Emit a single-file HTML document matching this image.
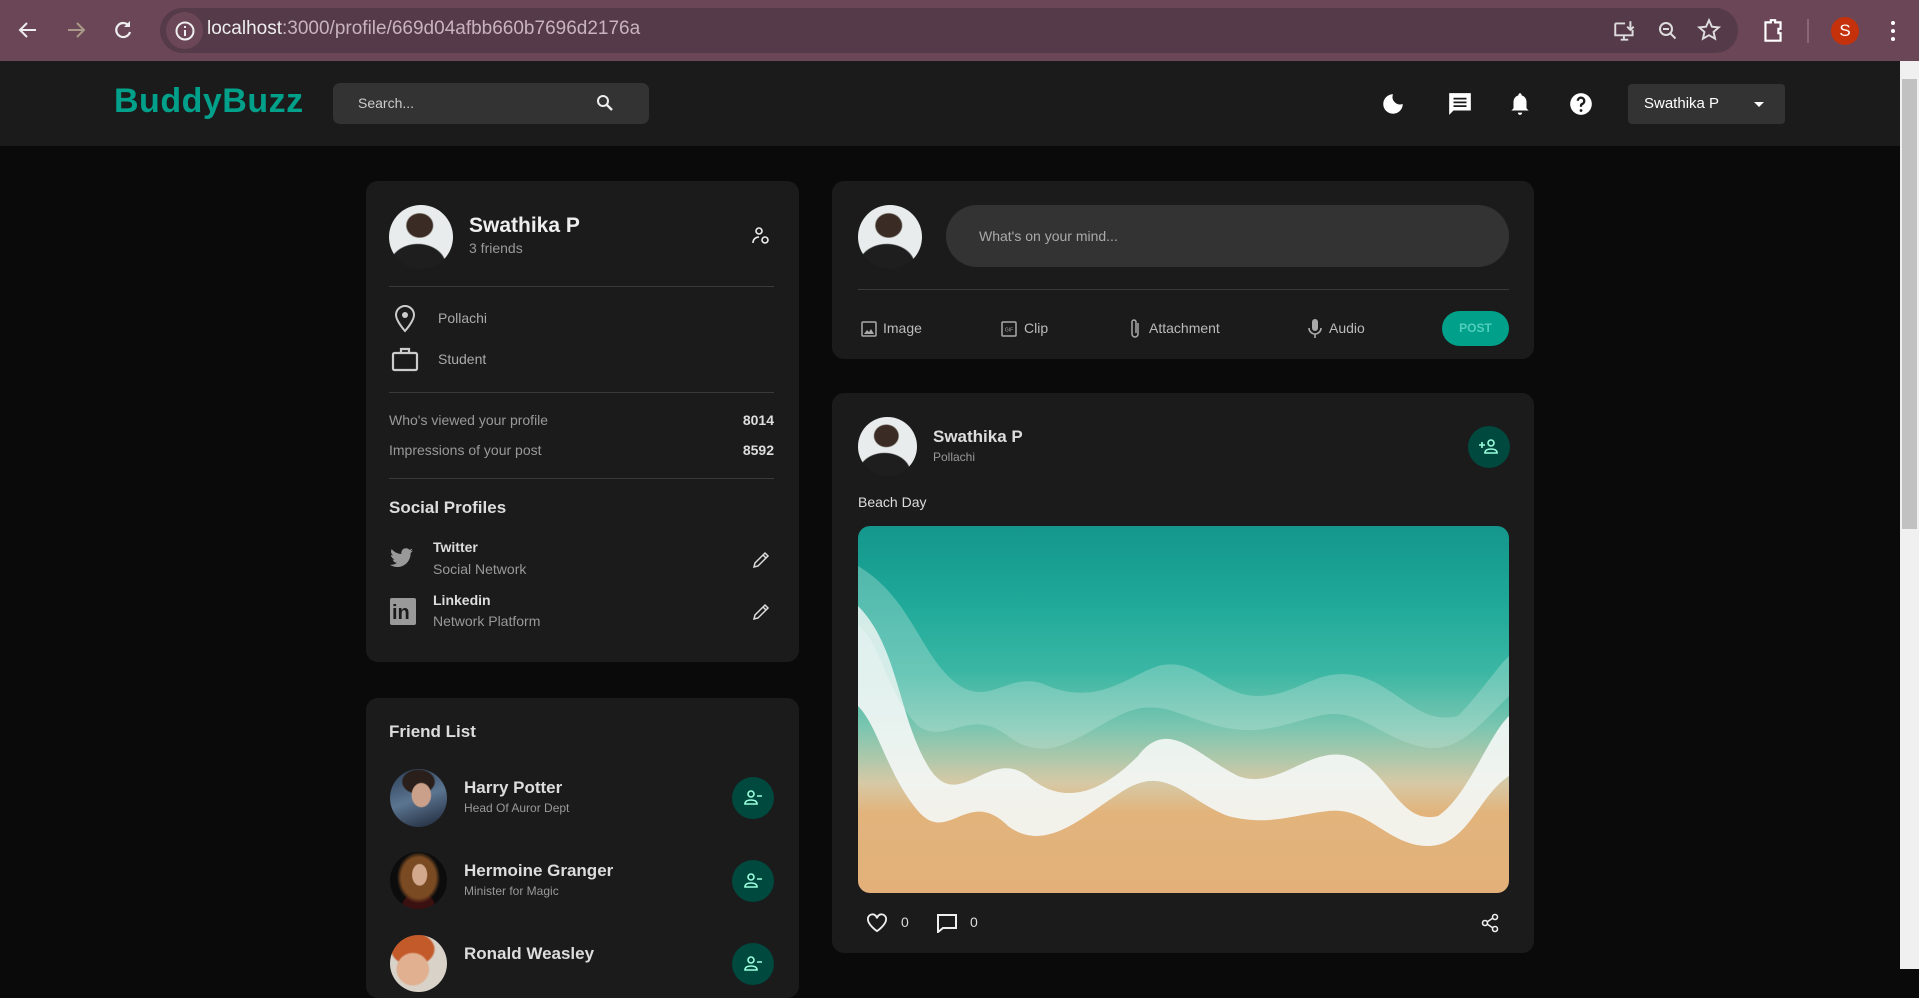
<!DOCTYPE html>
<html><head><meta charset="utf-8"><style>
*{box-sizing:border-box;margin:0;padding:0}
body{width:1919px;height:969px;overflow:hidden;background:#0a0a0a;font-family:"Liberation Sans",sans-serif;position:relative;color:#ddd}
.a{position:absolute}
.chrome{left:0;top:0;width:1919px;height:61px;background:#6b4657}
.url{left:160px;top:8px;width:1578px;height:45px;border-radius:23px;background:#553a49}
.nav{left:0;top:61px;width:1900px;height:85px;background:#1b1b1b}
.sb{left:1900px;top:61px;width:19px;height:908px;background:#f0f0f0}
.card{background:#1b1b1b;border-radius:12px}
.hr{height:1px;background:#3a3a3a}
.t{white-space:nowrap}
.av{border-radius:50%;overflow:hidden}
.me{background:radial-gradient(ellipse 22% 20% at 48% 32%,#3a2c24 0 90%,transparent 100%),radial-gradient(ellipse 45% 35% at 45% 95%,#1e1e1e 0 95%,transparent 100%),#e8ecec}
.btn{border-radius:50%;background:#00493f;width:42px;height:42px}
</style></head><body>
<div class="a chrome"></div>
<div class="a url"></div>
<svg class="a" style="left:16px;top:18px" width="24" height="24" viewBox="0 0 24 24"><path d="M20 12H5M11 5l-7 7 7 7" stroke="#eee" stroke-width="2" fill="none"/></svg>
<svg class="a" style="left:64px;top:18px" width="24" height="24" viewBox="0 0 24 24"><path d="M4 12h15M13 5l7 7-7 7" stroke="#a98" stroke-width="2" fill="none"/></svg>
<svg class="a" style="left:111px;top:18px" width="24" height="24" viewBox="0 0 24 24"><path d="M18 8a7 7 0 1 0 1 6" stroke="#eee" stroke-width="2.2" fill="none"/><path d="M19 3v6h-6z" fill="#eee"/></svg>
<div class="a" style="left:166px;top:12px;width:37px;height:37px;border-radius:50%;background:#6b4657"></div>
<svg class="a" style="left:174px;top:20px" width="22" height="22" viewBox="0 0 22 22"><circle cx="11" cy="11" r="8.5" stroke="#eee" stroke-width="2" fill="none"/><path d="M11 10v6M11 6v2" stroke="#eee" stroke-width="2"/></svg>
<div class="a t" style="left:207px;top:18px;font-size:19px;color:#eee">localhost<span style="color:#c9b3be">:3000/profile/669d04afbb660b7696d2176a</span></div>
<svg class="a" style="left:1612px;top:18px" width="26" height="26" viewBox="0 0 24 24"><path d="M3 5h9M3 5v11h16v-5M8 20h7M11 16v4" stroke="#ddd" stroke-width="1.8" fill="none"/><path d="M17 3v8M14 8l3 3 3-3" stroke="#ddd" stroke-width="1.8" fill="none"/></svg>
<svg class="a" style="left:1656px;top:19px" width="24" height="24" viewBox="0 0 24 24"><circle cx="10" cy="10" r="6" stroke="#ddd" stroke-width="2" fill="none"/><path d="M14.5 14.5l5 5M7 10h6" stroke="#ddd" stroke-width="2"/></svg>
<svg class="a" style="left:1696px;top:17px" width="26" height="26" viewBox="0 0 24 24"><path d="M12 3l2.7 6 6.3.6-4.8 4.2 1.4 6.2L12 16.8 6.4 20l1.4-6.2L3 9.6 9.3 9z" stroke="#ddd" stroke-width="1.8" fill="none"/></svg>
<svg class="a" style="left:1760px;top:17px" width="26" height="28" viewBox="0 0 24 26"><path d="M5 5h5V3h4v2h5v6h-2v4h2v7H5z" stroke="#fff" stroke-width="2" fill="none"/></svg>
<div class="a" style="left:1807px;top:19px;width:2px;height:24px;background:#8a6678"></div>
<div class="a" style="left:1831px;top:17px;width:28px;height:28px;border-radius:50%;background:#c5310b;color:#fff;font-size:17px;text-align:center;line-height:28px">S</div>
<div class="a" style="left:1891px;top:21px;width:4px;height:4px;border-radius:2px;background:#fff;box-shadow:0 8px #fff,0 16px #fff"></div>

<div class="a nav"></div>
<div class="a sb"><div style="position:absolute;left:2px;top:18px;width:15px;height:450px;background:#c1c1c1"></div></div>
<div class="a t" style="left:114px;top:82px;font-size:34px;font-weight:bold;color:#00a08a;letter-spacing:0.5px">BuddyBuzz</div>
<div class="a" style="left:333px;top:83px;width:316px;height:41px;border-radius:7px;background:#333"></div>
<div class="a t" style="left:358px;top:95px;font-size:14px;color:#ccc">Search...</div>
<svg class="a" style="left:595px;top:93px" width="20" height="20" viewBox="0 0 20 20"><circle cx="8" cy="8" r="5" stroke="#eee" stroke-width="2" fill="none"/><path d="M12 12l5 5" stroke="#eee" stroke-width="2.4"/></svg>
<svg class="a" style="left:1380px;top:91px" width="26" height="26" viewBox="0 0 24 24"><path d="M12 3a9 9 0 1 0 9 9 7 7 0 0 1-9-9z" fill="#fff"/></svg>
<svg class="a" style="left:1447px;top:91px" width="26" height="26" viewBox="0 0 24 24"><path d="M2 2h20v16H6l-4 4z" fill="#fff"/><path d="M6 7h12M6 10.5h12M6 14h12" stroke="#1b1b1b" stroke-width="1.6"/></svg>
<svg class="a" style="left:1507px;top:91px" width="26" height="26" viewBox="0 0 24 24"><path d="M12 2a2 2 0 0 1 1.5 2A6 6 0 0 1 18 10v6l2 2H4l2-2v-6a6 6 0 0 1 4.5-6A2 2 0 0 1 12 2zM10 20h4a2 2 0 0 1-4 0z" fill="#fff"/></svg>
<svg class="a" style="left:1568px;top:91px" width="26" height="26" viewBox="0 0 24 24"><circle cx="12" cy="12" r="10" fill="#fff"/><path d="M9 9a3 3 0 1 1 4 3c-1 .5-1 1-1 2.5" stroke="#1b1b1b" stroke-width="2.2" fill="none"/><circle cx="12" cy="18" r="1.3" fill="#1b1b1b"/></svg>
<div class="a" style="left:1628px;top:84px;width:157px;height:40px;border-radius:4px;background:#333"></div>
<div class="a t" style="left:1644px;top:95px;font-size:15px;color:#fff">Swathika P</div>
<div class="a" style="left:1754px;top:102px;border:5px solid transparent;border-top-color:#fff;border-bottom:0"></div>

<!-- profile card -->
<div class="a card" style="left:366px;top:181px;width:433px;height:481px"></div>
<div class="a av me" style="left:389px;top:205px;width:64px;height:64px"></div>
<div class="a t" style="left:469px;top:214px;font-size:21px;font-weight:bold;color:#eee">Swathika P</div>
<div class="a t" style="left:469px;top:240px;font-size:14px;color:#999">3 friends</div>
<svg class="a" style="left:751px;top:226px" width="20" height="20" viewBox="0 0 20 20"><circle cx="8" cy="5" r="3" stroke="#eee" stroke-width="1.6" fill="none"/><path d="M2 17c0-4 3-6 6-6" stroke="#eee" stroke-width="1.6" fill="none"/><circle cx="14" cy="14" r="3" stroke="#eee" stroke-width="1.6" fill="none"/></svg>
<div class="a hr" style="left:389px;top:286px;width:385px"></div>
<svg class="a" style="left:393px;top:305px" width="24" height="28" viewBox="0 0 24 28"><path d="M12 26S3 16 3 10a9 9 0 0 1 18 0c0 6-9 16-9 16z" stroke="#ccc" stroke-width="2" fill="none"/><circle cx="12" cy="10" r="3" fill="#ccc"/></svg>
<div class="a t" style="left:438px;top:310px;font-size:14px;color:#aaa">Pollachi</div>
<svg class="a" style="left:391px;top:346px" width="28" height="26" viewBox="0 0 28 26"><rect x="2" y="7" width="24" height="17" rx="1.5" stroke="#ccc" stroke-width="2.2" fill="none"/><path d="M10 7V3h8v4" stroke="#ccc" stroke-width="2.2" fill="none"/></svg>
<div class="a t" style="left:438px;top:351px;font-size:14px;color:#aaa">Student</div>
<div class="a hr" style="left:389px;top:392px;width:385px"></div>
<div class="a t" style="left:389px;top:412px;font-size:14px;color:#999">Who's viewed your profile</div>
<div class="a t" style="left:700px;top:412px;width:74px;text-align:right;font-size:14px;font-weight:bold;color:#ddd">8014</div>
<div class="a t" style="left:389px;top:442px;font-size:14px;color:#999">Impressions of your post</div>
<div class="a t" style="left:700px;top:442px;width:74px;text-align:right;font-size:14px;font-weight:bold;color:#ddd">8592</div>
<div class="a hr" style="left:389px;top:478px;width:385px"></div>
<div class="a t" style="left:389px;top:498px;font-size:17px;font-weight:bold;color:#ddd">Social Profiles</div>
<svg class="a" style="left:389px;top:546px" width="26" height="24" viewBox="0 0 24 24"><path d="M23 4.5a9 9 0 0 1-2.7.8A4.7 4.7 0 0 0 22.4 2.6a9.4 9.4 0 0 1-3 1.1 4.7 4.7 0 0 0-8 4.3A13.3 13.3 0 0 1 1.700 3.1a4.7 4.7 0 0 0 1.4 6.3 4.6 4.6 0 0 1-2.1-.6 4.7 4.7 0 0 0 3.8 4.6 4.7 4.7 0 0 1-2.1.1 4.7 4.7 0 0 0 4.4 3.3A9.4 9.4 0 0 1 0 18.7 13.3 13.3 0 0 0 7.2 21c8.6 0 13.4-7.2 13.4-13.4v-.6A9.6 9.6 0 0 0 23 4.5z" fill="#999"/></svg>
<div class="a t" style="left:433px;top:539px;font-size:14px;font-weight:bold;color:#ddd">Twitter</div>
<div class="a t" style="left:433px;top:561px;font-size:14px;color:#999">Social Network</div>
<svg class="a" style="left:752px;top:551px" width="18" height="18" viewBox="0 0 18 18"><path d="M2 16l1-4L13 2l3 3L6 15z M11 4l3 3" stroke="#ddd" stroke-width="1.5" fill="none"/></svg>
<div class="a" style="left:390px;top:598px;width:26px;height:27px;background:#999;border-radius:2px;color:#1b1b1b;font-weight:bold;font-size:20px;line-height:30px;padding-left:2px">in</div>
<div class="a t" style="left:433px;top:592px;font-size:14px;font-weight:bold;color:#ddd">Linkedin</div>
<div class="a t" style="left:433px;top:613px;font-size:14px;color:#999">Network Platform</div>
<svg class="a" style="left:752px;top:603px" width="18" height="18" viewBox="0 0 18 18"><path d="M2 16l1-4L13 2l3 3L6 15z M11 4l3 3" stroke="#ddd" stroke-width="1.5" fill="none"/></svg>

<!-- friends -->
<div class="a card" style="left:366px;top:698px;width:433px;height:300px"></div>
<div class="a t" style="left:389px;top:722px;font-size:17px;font-weight:bold;color:#ddd">Friend List</div>
<div class="a av" style="left:390px;top:769px;width:57px;height:58px;background:radial-gradient(ellipse 18% 22% at 55% 45%,#caa08a 0 90%,transparent 100%),radial-gradient(ellipse 30% 22% at 50% 22%,#2a1f1a 0 90%,transparent 100%),linear-gradient(160deg,#2b3d55,#5b7591 50%,#1d2536)"></div>
<div class="a t" style="left:464px;top:778px;font-size:17px;font-weight:bold;color:#ddd">Harry Potter</div>
<div class="a t" style="left:464px;top:801px;font-size:12px;color:#999">Head Of Auror Dept</div>
<div class="a btn" style="left:732px;top:777px"></div>
<div class="a av" style="left:390px;top:852px;width:57px;height:57px;background:radial-gradient(ellipse 14% 20% at 52% 40%,#d2a98c 0 90%,transparent 100%),radial-gradient(ellipse 38% 45% at 50% 45%,#7a4a22 0 80%,transparent 100%),radial-gradient(ellipse 30% 25% at 50% 95%,#3a1010 0 90%,transparent 100%),#0c0c0c"></div>
<div class="a t" style="left:464px;top:861px;font-size:17px;font-weight:bold;color:#ddd">Hermoine Granger</div>
<div class="a t" style="left:464px;top:884px;font-size:12px;color:#999">Minister for Magic</div>
<div class="a btn" style="left:732px;top:860px"></div>
<div class="a av" style="left:390px;top:935px;width:57px;height:57px;background:radial-gradient(ellipse 30% 30% at 40% 60%,#e0b090 0 90%,transparent 100%),radial-gradient(ellipse 40% 30% at 40% 25%,#c35a2a 0 90%,transparent 100%),#d9d2c8"></div>
<div class="a t" style="left:464px;top:944px;font-size:17px;font-weight:bold;color:#ddd">Ronald Weasley</div>
<div class="a btn" style="left:732px;top:943px"></div>
<svg class="a" style="left:742px;top:787px" width="22" height="22" viewBox="0 0 22 22"><circle cx="9" cy="7" r="3" stroke="#9fd" stroke-width="1.6" fill="none"/><path d="M3 17c0-3 3-4 6-4s6 1 6 4z M15 9h5" stroke="#9fd" stroke-width="1.6" fill="none"/></svg>
<svg class="a" style="left:742px;top:870px" width="22" height="22" viewBox="0 0 22 22"><circle cx="9" cy="7" r="3" stroke="#9fd" stroke-width="1.6" fill="none"/><path d="M3 17c0-3 3-4 6-4s6 1 6 4z M15 9h5" stroke="#9fd" stroke-width="1.6" fill="none"/></svg>
<svg class="a" style="left:742px;top:953px" width="22" height="22" viewBox="0 0 22 22"><circle cx="9" cy="7" r="3" stroke="#9fd" stroke-width="1.6" fill="none"/><path d="M3 17c0-3 3-4 6-4s6 1 6 4z M15 9h5" stroke="#9fd" stroke-width="1.6" fill="none"/></svg>

<!-- compose card -->
<div class="a card" style="left:832px;top:181px;width:702px;height:178px"></div>
<div class="a av me" style="left:858px;top:205px;width:64px;height:64px"></div>
<div class="a" style="left:946px;top:205px;width:563px;height:62px;border-radius:31px;background:#333"></div>
<div class="a t" style="left:979px;top:228px;font-size:14px;color:#aaa">What's on your mind...</div>
<div class="a hr" style="left:858px;top:289px;width:651px"></div>
<svg class="a" style="left:860px;top:320px" width="18" height="18" viewBox="0 0 18 18"><rect x="2" y="2" width="14" height="14" rx="1" stroke="#aaa" stroke-width="1.5" fill="none"/><path d="M4 14l3-4 2 2 2-3 3 5z" fill="#aaa"/></svg>
<div class="a t" style="left:883px;top:320px;font-size:14px;color:#bbb">Image</div>
<svg class="a" style="left:1000px;top:320px" width="18" height="18" viewBox="0 0 18 18"><rect x="2" y="2" width="14" height="14" rx="1" stroke="#aaa" stroke-width="1.5" fill="none"/><text x="9" y="11.5" font-size="5" fill="#aaa" text-anchor="middle" font-family="Liberation Sans">GIF</text></svg>
<div class="a t" style="left:1024px;top:320px;font-size:14px;color:#bbb">Clip</div>
<svg class="a" style="left:1127px;top:317px" width="16" height="24" viewBox="0 0 16 24"><path d="M11 6v11a3 3 0 0 1-6 0V5a2 2 0 0 1 4 0v11" stroke="#aaa" stroke-width="1.5" fill="none"/></svg>
<div class="a t" style="left:1149px;top:320px;font-size:14px;color:#bbb">Attachment</div>
<svg class="a" style="left:1306px;top:318px" width="18" height="22" viewBox="0 0 18 22"><rect x="6" y="1" width="6" height="12" rx="3" fill="#aaa"/><path d="M3 10a6 6 0 0 0 12 0M9 16v4" stroke="#aaa" stroke-width="1.6" fill="none"/></svg>
<div class="a t" style="left:1329px;top:320px;font-size:14px;color:#bbb">Audio</div>
<div class="a" style="left:1442px;top:311px;width:67px;height:35px;border-radius:18px;background:#00a08a;color:#50cfbd;font-size:12px;font-weight:bold;text-align:center;line-height:35px">POST</div>

<!-- post -->
<div class="a card" style="left:832px;top:393px;width:702px;height:560px"></div>
<div class="a av me" style="left:858px;top:417px;width:59px;height:59px"></div>
<div class="a t" style="left:933px;top:427px;font-size:17px;font-weight:bold;color:#ddd">Swathika P</div>
<div class="a t" style="left:933px;top:450px;font-size:12px;color:#999">Pollachi</div>
<div class="a btn" style="left:1468px;top:426px"></div>
<svg class="a" style="left:1477px;top:436px" width="24" height="22" viewBox="0 0 24 22"><circle cx="14" cy="7" r="3" stroke="#9fd" stroke-width="1.6" fill="none"/><path d="M8 17c0-3 3-4 6-4s6 1 6 4z M2 9h6M5 6v6" stroke="#9fd" stroke-width="1.6" fill="none"/></svg>
<div class="a t" style="left:858px;top:494px;font-size:14px;color:#ddd">Beach Day</div>
<div class="a" style="left:858px;top:526px;width:651px;height:367px;border-radius:12px;overflow:hidden;background:linear-gradient(180deg,#14968c 0%,#1ea898 20%,#3bb7a4 40%,#7cc6b0 55%,#d6c9a6 70%,#e2b47c 78%,#e3b07a 100%)">
<svg width="651" height="367" viewBox="0 0 651 367" style="position:absolute;left:0;top:0">
<path d="M0 80 C40 120 40 190 70 240 C100 290 130 220 170 250 C210 285 250 260 280 230 C310 190 340 230 380 250 C420 265 450 220 490 230 C530 240 540 300 580 290 C610 270 630 210 651 190 L651 250 C620 270 610 320 570 320 C530 320 510 280 470 285 C430 290 410 300 370 290 C330 275 310 240 270 262 C230 285 190 330 150 300 C110 260 90 320 60 285 C30 250 20 200 0 180 Z" fill="#f4f7f6" opacity=".9"/>
<path d="M0 40 C50 70 60 120 90 150 C130 190 150 140 190 160 C240 180 270 150 300 140 C340 130 360 170 400 170 C440 170 460 140 500 150 C540 160 560 200 600 190 C620 170 640 140 651 130 L651 170 C620 200 600 230 560 220 C520 210 500 180 460 190 C420 200 400 210 360 200 C320 190 300 170 260 190 C220 210 190 240 150 210 C110 180 90 220 60 200 C30 170 20 110 0 100 Z" fill="#bfe5dc" opacity=".35"/>
</svg>
</div>
<svg class="a" style="left:866px;top:913px" width="22" height="20" viewBox="0 0 24 22"><path d="M12 20S2 13 2 7a5 5 0 0 1 10-1 5 5 0 0 1 10 1c0 6-10 13-10 13z" stroke="#eee" stroke-width="2" fill="none"/></svg>
<div class="a t" style="left:901px;top:914px;font-size:14px;color:#ddd">0</div>
<svg class="a" style="left:936px;top:913px" width="22" height="20" viewBox="0 0 22 20"><path d="M2 2h18v13H7l-5 4z" stroke="#eee" stroke-width="2" fill="none"/></svg>
<div class="a t" style="left:970px;top:914px;font-size:14px;color:#ddd">0</div>
<svg class="a" style="left:1480px;top:913px" width="20" height="20" viewBox="0 0 20 20"><circle cx="15" cy="4" r="2.5" stroke="#eee" stroke-width="1.6" fill="none"/><circle cx="5" cy="10" r="2.5" stroke="#eee" stroke-width="1.6" fill="none"/><circle cx="15" cy="16" r="2.5" stroke="#eee" stroke-width="1.6" fill="none"/><path d="M7 9l6-4M7 11l6 4" stroke="#eee" stroke-width="1.6"/></svg>
</body></html>
